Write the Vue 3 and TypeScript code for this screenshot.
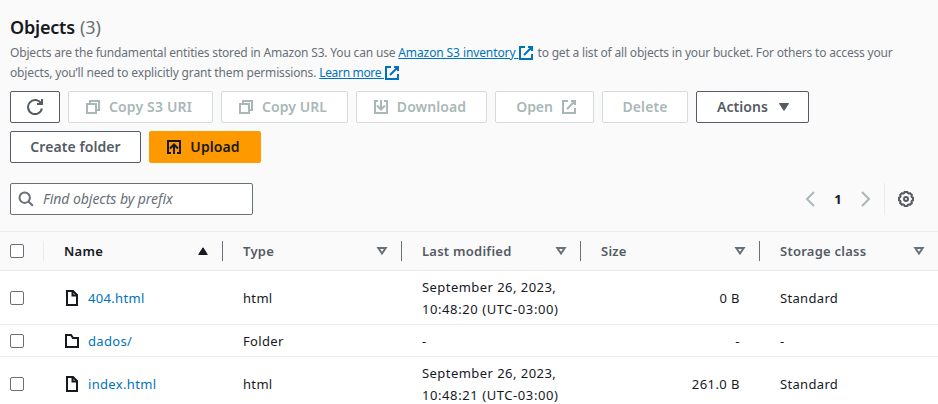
<script setup lang="ts">
interface S3Object {
  name: string
  kind: 'file' | 'folder'
  type: string
  modified: string[]
  size: string
  storage: string
}

const objects: S3Object[] = [
  { name: '404.html', kind: 'file', type: 'html', modified: ['September 26, 2023,', '10:48:20 (UTC-03:00)'], size: '0 B', storage: 'Standard' },
  { name: 'dados/', kind: 'folder', type: 'Folder', modified: ['-'], size: '-', storage: '-' },
  { name: 'index.html', kind: 'file', type: 'html', modified: ['September 26, 2023,', '10:48:21 (UTC-03:00)'], size: '261.0 B', storage: 'Standard' },
]

const columns: string[] = ['Name', 'Type', 'Last modified', 'Size', 'Storage class']
</script>

<template>
  <main class="panel">
    <header class="head">
      <h2 class="title"><span class="title-text">Objects</span><span class="count">(3)</span></h2>
      <p class="desc">
        <span class="line"><span class="d1">Objects are the fundamental entities stored in Amazon S3. You can use </span><a class="link l1">Amazon S3 inventory&nbsp;</a><svg class="icon ext" viewBox="0 0 16 16"><path d="M7 2H2v12h12V9M10 2h4v4M6 10l8-8" /></svg><span class="d2">to get a list of all objects in your bucket. For others to access your</span></span>
        <span class="line"><span class="d3">objects, you’ll need to explicitly grant them permissions. </span><a class="link l2">Learn more&nbsp;</a><svg class="icon ext" viewBox="0 0 16 16"><path d="M7 2H2v12h12V9M10 2h4v4M6 10l8-8" /></svg></span>
      </p>
      <div class="actions">
        <button class="btn w-refresh" aria-label="Refresh"><svg class="icon" viewBox="0 0 16 16"><path d="M14.9 9.5A7 7 0 1 1 14 4.400M15 0v5h-5" /></svg></button>
        <button class="btn off w-uri"><svg class="icon lead" viewBox="0 0 16 16"><path d="M2 5h9v9H2zM5 5V2h9v9h-3" /></svg><span>Copy S3 URI</span></button>
        <button class="btn off w-url"><svg class="icon lead" viewBox="0 0 16 16"><path d="M2 5h9v9H2zM5 5V2h9v9h-3" /></svg><span>Copy URL</span></button>
        <button class="btn off w-download"><svg class="icon lead" viewBox="0 0 16 16"><path d="M5 2H2v12h12V2h-3M8 1v9M4 6.5l4 4 4-4" /></svg><span>Download</span></button>
        <button class="btn off w-open"><span>Open</span><svg class="icon trail" viewBox="0 0 16 16"><path d="M7 2H2v12h12V9M10 2h4v4M6 10l8-8" /></svg></button>
        <button class="btn off w-delete"><span>Delete</span></button>
        <button class="btn w-actions"><span>Actions</span><svg class="icon caret trail" viewBox="0 0 16 16"><path d="M3.5 4.500h9L8 11.500z" /></svg></button>
        <button class="btn w-create"><span>Create folder</span></button>
        <button class="btn primary w-upload"><svg class="icon lead" viewBox="0 0 16 16"><path d="M5 14H2V2h12v12h-3M8 15V6M4 9.5l4-4 4 4" /></svg><span>Upload</span></button>
      </div>
      <div class="tools">
        <div class="search">
          <svg class="icon" viewBox="0 0 16 16"><circle cx="6.7" cy="6.7" r="5.2" /><path d="M10.5 10.5l4.3 4.3" /></svg>
          <span>Find objects by prefix</span>
        </div>
        <nav class="pager">
          <svg class="icon chev" viewBox="0 0 16 16"><path d="M12 1L5 8l7 7" /></svg>
          <b>1</b>
          <svg class="icon chev" viewBox="0 0 16 16"><path d="M4 1l7 7-7 7" /></svg>
          <i class="rule"></i>
          <svg class="icon gear" viewBox="0 0 16 16"><path d="M6.2 2.1 6.6 1h2.8l.4 1.1 1.2.5 1-.5 1.9 1.9-.5 1 .5 1.2 1.1.4v2.8l-1.1.4-.5 1.2.5 1-1.9 1.9-1-.5-1.2.5-.4 1.1H6.6l-.4-1.1-1.2-.5-1 .5L2.1 12l.5-1-.5-1.2L1 9.4V6.600l1.100-.4.5-1.200-.5-1L4 2.100l1 .5z" /><circle cx="8" cy="8" r="2" /></svg>
        </nav>
      </div>
    </header>

    <section class="table">
      <div class="row thead">
        <div class="cell check"><i class="box"></i></div>
        <div v-for="(c, i) in columns" :key="c" class="cell th" :class="{ sorted: i === 0 }">
          <span>{{ c }}</span>
          <svg class="icon sort" viewBox="0 0 16 16"><path :d="i === 0 ? 'M3.700 11.500h8.600L8 4.800z' : 'M4.300 5h7.400L8 10.500z'" /></svg>
        </div>
      </div>
      <div v-for="o in objects" :key="o.name" class="row" :class="{ short: o.kind === 'folder' }">
        <div class="cell check"><i class="box"></i></div>
        <div class="cell name">
          <svg v-if="o.kind === 'file'" class="icon" viewBox="0 0 16 16"><path d="M3 1h6l4 4v10H3zM8.500 1v4.500H13" /></svg>
          <svg v-else class="icon" viewBox="0 0 16 16"><path d="M2 2h5l2 3h5v9H2z" /></svg>
          <a>{{ o.name }}</a>
        </div>
        <div class="cell">{{ o.type }}</div>
        <div class="cell modified"><span v-for="m in o.modified" :key="m">{{ m }}</span></div>
        <div class="cell size">{{ o.size }}</div>
        <div class="cell">{{ o.storage }}</div>
      </div>
    </section>
  </main>
</template>

<style>
body { background: #fff; overflow: hidden; }
</style>

<style scoped>
* { box-sizing: border-box; }
.panel { width: 938px; height: 404px; overflow: hidden; font: 14px/22px "Noto Sans", "Open Sans", sans-serif; color: #16191f; background: #fff; }
.head { height: 231px; padding: 16px 10px 0; background: #fafafa; }
.title { display: flex; gap: 5px; margin: 0; font-size: 18px; line-height: 22px; font-weight: 600; white-space: nowrap; }
.title-text { letter-spacing: -0.2px; }
.count { font-weight: 400; color: #687078; }
.desc { margin: 5px 0 8px; font-size: 12px; line-height: 20px; color: #687078; }
.line { display: flex; align-items: center; height: 20px; white-space: pre; }
.d1 { letter-spacing: -0.18px; }
.d2 { letter-spacing: -0.18px; }
.d3 { letter-spacing: -0.155px; }
.l1 { letter-spacing: -0.1px; }
.l2 { letter-spacing: -0.33px; }
.link { color: #0073bb; text-decoration: underline; }
.icon { flex: none; display: block; width: 16px; height: 16px; fill: none; stroke: currentColor; stroke-width: 2; }
.ext { color: #0073bb; margin-right: 3px; }
.actions { display: flex; flex-wrap: wrap; gap: 8px; }
.btn { display: flex; align-items: center; justify-content: center; gap: 8px; height: 32px; padding: 0; border: 1px solid #545b64; border-radius: 2px; background: #fff; color: #545b64; font: 600 14px/22px "Noto Sans", "Open Sans", sans-serif; letter-spacing: 0.08px; white-space: nowrap; }
.lead { margin-left: -4px; }
.trail { margin-right: -4px; }
.off { border-color: #d5dbdb; color: #aab7b8; }
.primary { background: #ff9900; border-color: #ff9900; color: #16191f; }
.w-refresh { width: 50px; }
.w-uri { width: 145px; letter-spacing: 0.16px; }
.w-url { width: 127px; }
.w-download { width: 131px; }
.w-open { width: 99px; letter-spacing: -0.1px; }
.w-delete { width: 86px; }
.w-actions { width: 113px; }
.w-create { width: 131px; }
.w-upload { width: 112px; }
.caret { fill: currentColor; stroke-width: 1; }
.tools { display: flex; justify-content: space-between; margin-top: 20px; }
.search { display: flex; align-items: center; gap: 9px; width: 243px; height: 32px; padding-left: 7px; border: 1px solid #687078; border-radius: 2px; background: #fff; color: #687078; font-style: italic; letter-spacing: -0.04px; white-space: nowrap; }
.pager { display: flex; align-items: center; height: 32px; padding-right: 14px; }
.chev { color: #aab7b8; }
.pager b { width: 40px; text-align: center; font-size: 13px; }
.rule { width: 1px; height: 32px; margin: 0 13px 0 10px; background: #eaeded; }
.gear { color: #545b64; }
.row { display: grid; grid-template-columns: 44px repeat(5, 179px); height: 54px; border-bottom: 1px solid #eaeded; }
.thead { height: 40px; border-top: 1px solid #eaeded; background: #fafafa; }
.short { height: 32px; }
.cell { display: flex; align-items: center; padding: 0 20px; white-space: nowrap; font-size: 13px; letter-spacing: 0.33px; }
.check { padding: 0 0 0 10px; }
.box { width: 14px; height: 14px; border: 1px solid #687078; border-radius: 2px; background: #fff; }
.th { justify-content: space-between; padding-right: 12px; color: #545b64; font-weight: 600; letter-spacing: 0.25px; }
.cell.th { background: linear-gradient(#687078, #687078) right 0 center / 1px 20px no-repeat; }
.cell.th:last-child { background: none; }
.thead .check { background: linear-gradient(#eaeded, #eaeded) right 0 center / 1px 20px no-repeat; }
.cell.sorted { color: #16191f; }
.sort { stroke: #687078; }
.sorted .sort { fill: #16191f; stroke: #16191f; stroke-width: 1; }
.name { gap: 8px; }
.name a { color: #0073bb; }
.modified { flex-direction: column; align-items: flex-start; justify-content: center; letter-spacing: 0.45px; }
.modified span + span { letter-spacing: 0.58px; }
.size { justify-content: flex-end; letter-spacing: 0.45px; }
</style>
